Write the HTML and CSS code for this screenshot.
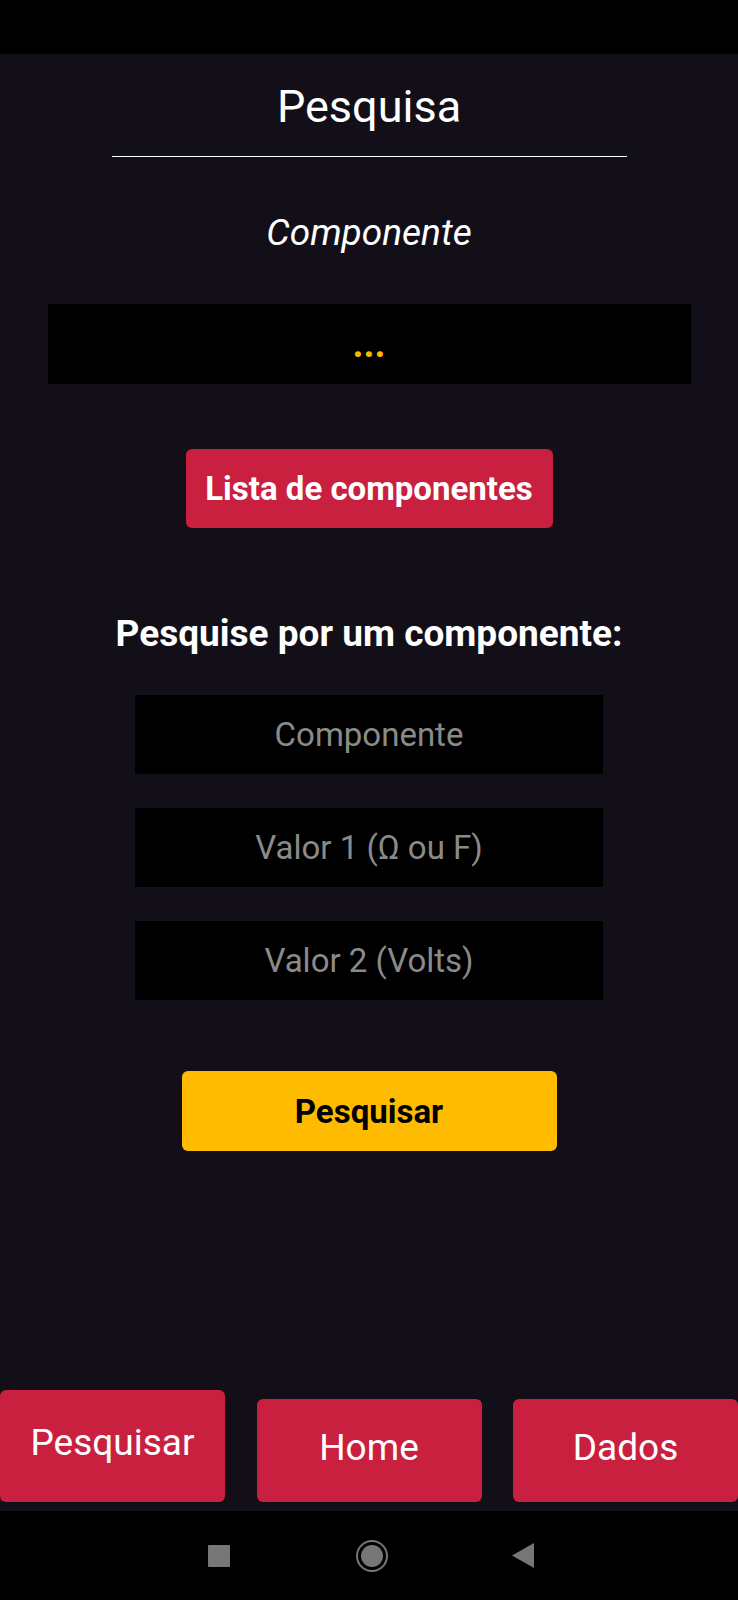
FILE: index.html
```html
<!DOCTYPE html>
<html lang="pt">
<head>
<meta charset="utf-8">
<title>Pesquisa</title>
<link rel="stylesheet" href="styles.css">
</head>
<body>
<div class="screen">
  <div class="status-bar"></div>
  <main class="content">
    <h1 class="title">Pesquisa</h1>
    <div class="divider"></div>
    <p class="subtitle">Componente</p>
    <div class="result-box"><span class="dots">...</span></div>
    <button class="btn btn-red btn-list">Lista de componentes</button>
    <h2 class="heading">Pesquise por um componente:</h2>
    <div class="fields">
      <input class="field" type="text" placeholder="Componente">
      <input class="field" type="text" placeholder="Valor 1 (Ω ou F)">
      <input class="field" type="text" placeholder="Valor 2 (Volts)">
    </div>
    <button class="btn btn-yellow">Pesquisar</button>
  </main>
  <nav class="tabs">
    <button class="tab tab-active">Pesquisar</button>
    <button class="tab">Home</button>
    <button class="tab">Dados</button>
  </nav>
  <div class="sys-nav">
    <span class="sys-square"></span>
    <span class="sys-circle"><span class="sys-circle-inner"></span></span>
    <svg class="sys-back" width="22" height="25" viewBox="0 0 22 25"><polygon points="22,0 22,25 0,12.5" fill="#767676"/></svg>
  </div>
</div>
</body>
</html>
```

FILE: styles.css
```css
html, body {
  margin: 0;
  padding: 0;
}
body {
  background: #130f18;
  font-family: Roboto, "Liberation Sans", sans-serif;
  color: #fff;
}
.screen {
  width: 738px;
  height: 1600px;
  display: flex;
  flex-direction: column;
  background: #130f18;
}
.status-bar {
  height: 54px;
  background: #000;
  flex: none;
}
.content {
  flex: 1;
  display: flex;
  flex-direction: column;
  align-items: center;
}
.title {
  margin: 27px 0 0;
  font-size: 45px;
  font-weight: 400;
  line-height: 1.172;
}
.divider {
  width: 515px;
  height: 1px;
  background: #fff;
  margin-top: 22px;
  margin-left: 1px;
}
.subtitle {
  margin: 54px 0 0;
  font-size: 37px;
  font-style: italic;
  line-height: 1.172;
}
.result-box {
  margin-top: 50px;
  width: 643px;
  height: 80px;
  background: #000;
  display: flex;
  align-items: center;
  justify-content: center;
}
.dots {
  color: #f8b900;
  font-size: 38px;
  font-weight: 700;
  line-height: 1.172;
}
.btn {
  border: none;
  border-radius: 6px;
  font-family: Roboto, "Liberation Sans", sans-serif;
  font-weight: 700;
  font-size: 33px;
  padding: 0;
  cursor: pointer;
}
.btn-red {
  background: #c9203f;
  color: #fff;
}
.btn-list {
  margin-top: 65px;
  width: 367px;
  height: 79px;
}
.heading {
  margin: 84px 0 0;
  font-size: 37px;
  font-weight: 700;
  line-height: 1.172;
}
.fields {
  margin-top: 40px;
  display: flex;
  flex-direction: column;
  gap: 34px;
}
.field {
  width: 468px;
  height: 79px;
  box-sizing: border-box;
  background: #000;
  border: none;
  outline: none;
  text-align: center;
  font-family: Roboto, "Liberation Sans", sans-serif;
  font-size: 33px;
  color: #fff;
  padding: 0;
}
.field::placeholder {
  color: #8a8a8a;
}
.btn-yellow {
  margin-top: 71px;
  width: 375px;
  height: 80px;
  background: #ffbb00;
  color: #000;
}
.tabs {
  flex: none;
  display: flex;
  justify-content: space-between;
  align-items: flex-end;
  padding-bottom: 9px;
}
.tab {
  width: 225px;
  height: 103px;
  border: none;
  border-radius: 6px;
  background: #c9203f;
  color: #fff;
  font-family: Roboto, "Liberation Sans", sans-serif;
  font-size: 37px;
  font-weight: 400;
  padding: 0 0 6px;
}
.tab-active {
  height: 112px;
  padding-bottom: 8px;
}
.sys-nav {
  flex: none;
  height: 89px;
  background: #000;
  display: flex;
  align-items: center;
  justify-content: center;
  padding-left: 4px;
}
.sys-square {
  width: 22px;
  height: 22px;
  background: #767676;
  border-radius: 1px;
}
.sys-circle {
  margin-left: 126px;
  width: 32px;
  height: 32px;
  box-sizing: border-box;
  border: 2.5px solid #767676;
  border-radius: 50%;
  display: flex;
  align-items: center;
  justify-content: center;
}
.sys-circle-inner {
  width: 22px;
  height: 22px;
  border-radius: 50%;
  background: #767676;
}
.sys-back {
  margin-left: 124px;
  display: block;
}
```
